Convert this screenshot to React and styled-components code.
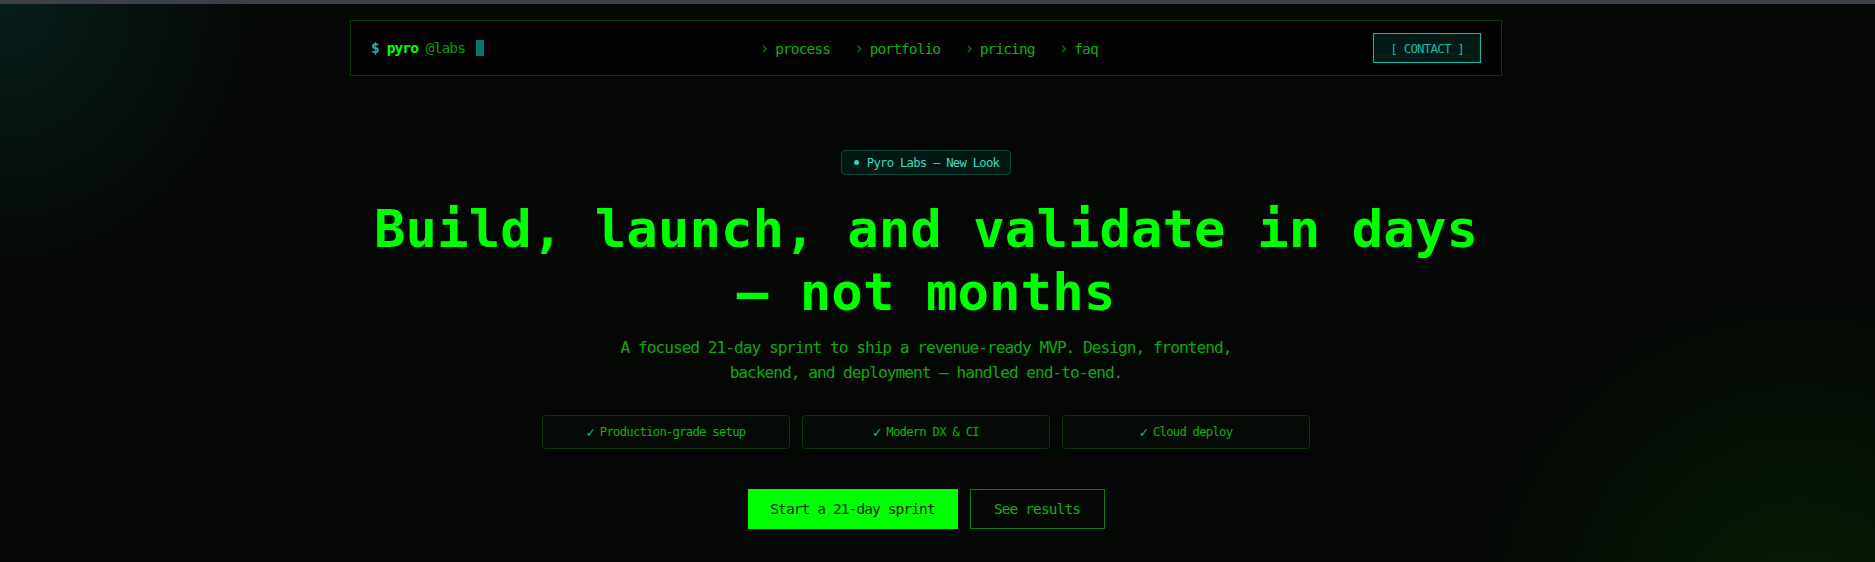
// Packages
import React from "react"
import styled, { createGlobalStyle } from "styled-components"

// Styles
const Global = createGlobalStyle`
    html, body {
        margin: 0;
        padding: 0;
        background: #050705;
    }

    * {
        box-sizing: border-box;
    }
`

const mono = `"DejaVu Sans Mono", "Liberation Mono", monospace`

// the design font is a narrow mono: taller glyphs on the same advance
const narrow = advance => `
    font-size: ${(advance / 0.54).toFixed(2)}px;
    letter-spacing: ${(advance - (advance / 0.54) * 0.602).toFixed(2)}px;
`

const Page = styled.div`
    min-height: 100vh;
    font-family: ${mono};
    background:
        radial-gradient(ellipse 340px 360px at 0% 0%, rgba(20, 184, 166, 0.13), transparent 78%),
        radial-gradient(circle 430px at 96% 110%, rgba(0, 255, 0, 0.09), transparent 80%),
        #050705;
`

const TopStrip = styled.div`
    height: 4px;
    background: #3e4049;
`

const Shell = styled.div`
    padding: 16px 23px 0 0;
`

const Header = styled.header`
    max-width: 1152px;
    height: 56px;
    margin: 0 auto;
    padding: 0 20px;
    display: flex;
    align-items: center;
    justify-content: space-between;
    border: 1px solid #0b3a0b;
    background: #010201;
`

const Logo = styled.div`
    display: flex;
    align-items: center;
    ${narrow(7.83)}
    line-height: 16px;
    white-space: pre;
`

const Part = styled.span`
    color: ${({ $tone }) =>
        $tone === "teal" ? "#25b5a3" : $tone === "dim" ? "#0e9a0e" : "#00ff00"};
    font-weight: ${({ $bold }) => ($bold ? 700 : 400)};
`

const Cursor = styled.span`
    width: 8px;
    height: 16px;
    margin-left: 11px;
    background: #0a7868;
`

const Nav = styled.nav`
    display: flex;
    align-items: center;
    gap: 24px;
    ${narrow(7.83)}
`

const NavLink = styled.a`
    color: #12b012;
    text-decoration: none;
    white-space: pre;

    &:before {
        content: "›";
        display: inline-block;
        width: 15.66px;
        color: #0b730b;
        font-size: 17px;
        letter-spacing: 0;
        line-height: 1;
    }
`

const Contact = styled.button`
    height: 30px;
    padding: 0 16px;
    border: 1px solid #14b8a6;
    background: #021a16;
    color: #1ab9a6;
    font-family: ${mono};
    ${narrow(6.7)}
    cursor: pointer;
`

const Hero = styled.main`
    display: flex;
    flex-direction: column;
    align-items: center;
    padding-top: 74px;
`

const Badge = styled.div`
    height: 25px;
    padding: 0 11px 0 12px;
    display: flex;
    align-items: center;
    gap: 8px;
    border: 1px solid #0e4a41;
    border-radius: 4px;
    background: #021612;
    color: #3ddcc4;
    ${narrow(6.62)}
`

const Dot = styled.span`
    width: 5px;
    height: 5px;
    border-radius: 50%;
    background: #2dd4bf;
`

const Title = styled.h1`
    margin: 22px 0 0;
    max-width: 1152px;
    text-align: center;
    color: #00ff00;
    font-size: 52.4px;
    line-height: 63px;
    font-weight: 700;
`

const Lead = styled.p`
    margin: 12px 0 0;
    max-width: 672px;
    text-align: center;
    color: #12a812;
    ${narrow(8.73)}
    line-height: 25px;
`

const Features = styled.div`
    margin-top: 30px;
    width: 768px;
    display: grid;
    grid-template-columns: repeat(3, 1fr);
    gap: 12px;
`

const Feature = styled.div`
    height: 34px;
    display: flex;
    align-items: center;
    justify-content: center;
    border: 1px solid #0c380c;
    border-radius: 4px;
    background: #060a06;
    color: #12b012;
    ${narrow(6.62)}
    white-space: pre;

    &:before {
        content: "✓";
        display: inline-block;
        width: 13.24px;
        color: #25b5a3;
        font-size: 14px;
        letter-spacing: 0;
        line-height: 1;
    }
`

const Actions = styled.div`
    margin-top: 40px;
    display: flex;
    gap: 12px;
`

const Button = styled.button`
    width: ${({ $width }) => $width}px;
    height: 40px;
    padding: 0;
    font-family: ${mono};
    ${narrow(7.83)}
    cursor: pointer;
    border: 1px solid ${({ $primary }) => ($primary ? "#00ff00" : "#0f7a0f")};
    background: ${({ $primary }) => ($primary ? "#00ff00" : "transparent")};
    color: ${({ $primary }) => ($primary ? "#031a03" : "#13b313")};
`

const links = ["process", "portfolio", "pricing", "faq"]
const features = ["Production-grade setup", "Modern DX & CI", "Cloud deploy"]

const App = () => {
    return (
        <>
            <Global />
            <Page>
                <TopStrip />

                <Shell>
                    <Header>
                        <Logo>
                            <Part $tone="teal" $bold>$ </Part>
                            <Part $bold>pyro </Part>
                            <Part $tone="dim">@labs</Part>
                            <Cursor />
                        </Logo>

                        <Nav>
                            {links.map(link => (
                                <NavLink key={link} href={`#${link}`}>
                                    {link}
                                </NavLink>
                            ))}
                        </Nav>

                        <Contact>[ CONTACT ]</Contact>
                    </Header>

                    <Hero>
                        <Badge>
                            <Dot />
                            Pyro Labs — New Look
                        </Badge>

                        <Title>
                            Build, launch, and validate in days
                            <br />— not months
                        </Title>

                        <Lead>
                            A focused 21-day sprint to ship a revenue-ready MVP.
                            Design, frontend, backend, and deployment — handled
                            end-to-end.
                        </Lead>

                        <Features>
                            {features.map(feature => (
                                <Feature key={feature}>{feature}</Feature>
                            ))}
                        </Features>

                        <Actions>
                            <Button $primary $width={210}>
                                Start a 21-day sprint
                            </Button>
                            <Button $width={135}>See results</Button>
                        </Actions>
                    </Hero>
                </Shell>
            </Page>
        </>
    )
}

export default App
